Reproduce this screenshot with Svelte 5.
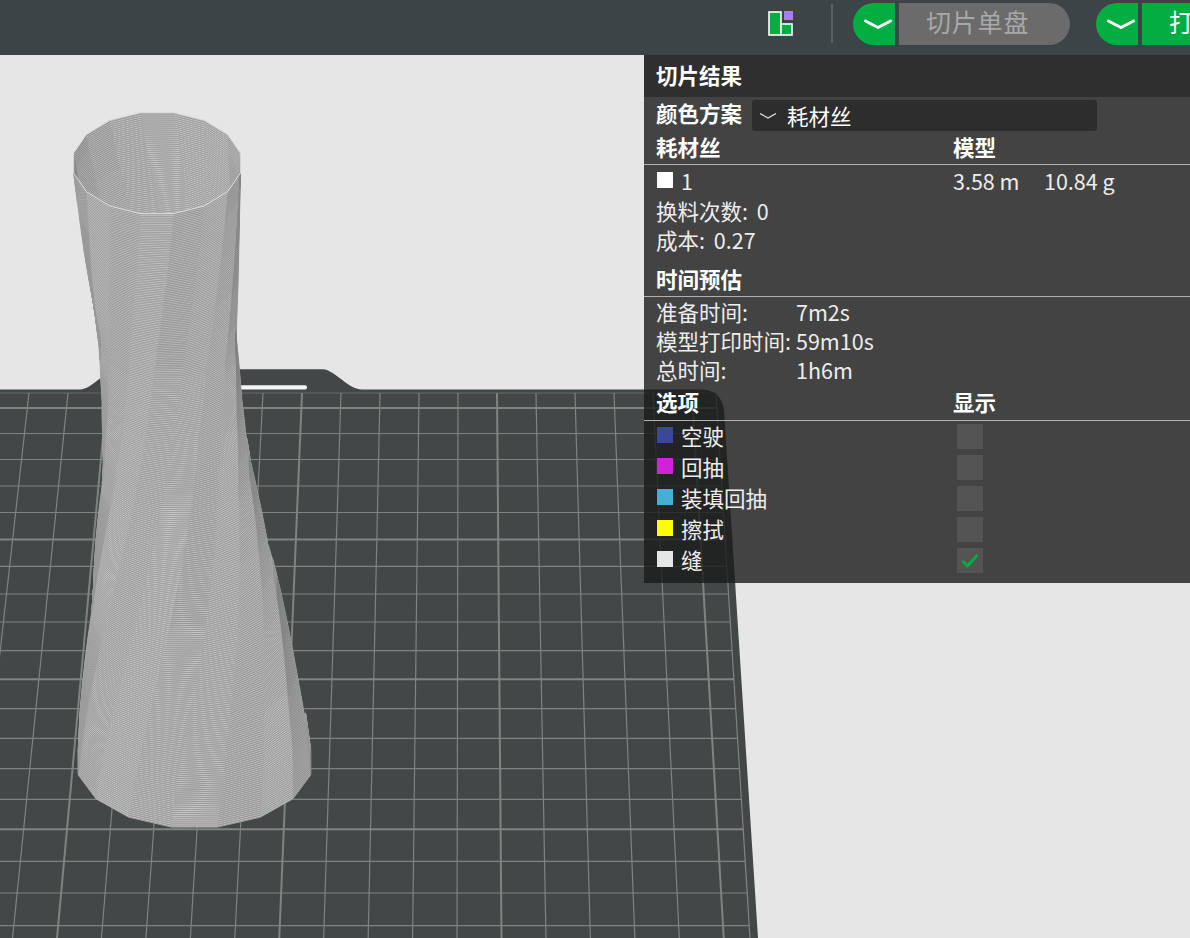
<script>
  // bed grid: column i from centre runs from x=497+39i at y=393 to x=501.5+44.45i at y=938
  const rowsY = [408, 433.5, 459.5, 486, 512.5, 539.5, 566.3, 594, 622, 650.7, 679.3, 708.7, 738.3, 768.7, 799.3, 829.3, 861.3, 893, 925.7];
  const thickRows = [408, 539.5, 679.3, 829.3];
  const edgeX = (y) => 716 + (y - 393) * 0.0627;
  const hLines = rowsY.map((y) => ({ y, x2: edgeX(y), w: thickRows.includes(y) ? 2 : 1.2 }));
  const vLines = [];
  for (let i = -12; i <= 5; i++) {
    vLines.push({ x1: 497 + 39 * i, x2: 501.5 + 44.45 * i, w: i % 5 === 0 ? 2 : 1.2 });
  }

  // vase silhouette: centre height, left x, right x
  const profile = [
    [163, 72, 242], [250, 84, 239], [340, 98, 237], [400, 102, 242], [470, 102, 252],
    [540, 96, 268], [600, 91, 282], [680, 83, 299], [720, 79, 308], [762, 76, 313]
  ];
  const TWIST = 90;
  const SIDES = 16;

  function ringAt(cy) {
    let a = profile[0], b = profile[profile.length - 1];
    for (let i = 0; i < profile.length - 1; i++) {
      if (cy >= profile[i][0] && cy <= profile[i + 1][0]) { a = profile[i]; b = profile[i + 1]; break; }
    }
    const t = (cy - a[0]) / (b[0] - a[0] || 1);
    const l = a[1] + (b[1] - a[1]) * t;
    const r = a[2] + (b[2] - a[2]) * t;
    const s = (762 - cy) / 599;
    return { cx: (l + r) / 2, rx: (r - l) / 2, ry: ((r - l) / 2) * (0.56 + 0.047 * s), tw: TWIST * (0.5 * s + 0.5 * s * s * (3 - 2 * s)) };
  }

  function vertex(ring, j, cy) {
    const deg = 11.25 + 22.5 * j - ring.tw;
    const rad = (deg * Math.PI) / 180;
    return [+(ring.cx + ring.rx * Math.cos(rad)).toFixed(2), +(cy + ring.ry * Math.sin(rad)).toFixed(2), deg + 11.25];
  }

  // layer lines packed just under a 2px period, so they beat against the pixels
  const STEP = 0.94;
  const outer = new Map();
  const inner = new Map();
  const put = (map, g, seg) => map.set(g, (map.get(g) || '') + seg);

  let layer = 0;
  for (let cy = 762; cy >= 163; cy -= STEP, layer++) {
    const ring = ringAt(cy);
    for (let j = 0; j < SIDES; j++) {
      const p = vertex(ring, j, cy);
      const q = vertex(ring, j + 1, cy);
      const mid = ((p[2] % 360) + 360) % 360;
      if (Math.sin((mid * Math.PI) / 180) < -0.05) continue;
      const base = 172 + 5 * Math.cos(((mid - 125) * Math.PI) / 180) + (j % 2 ? 2 : -2) - Math.max(0, (30 - mid) * 0.6);
      const g = Math.round((base + (layer % 2 ? 20 : -20)) / 4) * 4;
      put(outer, g, `M${p[0]} ${p[1]}L${q[0]} ${q[1]}`);
    }
  }
  layer = 0;
  for (let cy = 300; cy >= 163; cy -= STEP, layer++) {
    const ring = ringAt(cy);
    for (let j = 0; j < SIDES; j++) {
      const p = vertex(ring, j, cy);
      const q = vertex(ring, j + 1, cy);
      const mid = ((p[2] % 360) + 360) % 360;
      if (Math.sin((mid * Math.PI) / 180) > 0.05) continue;
      const base = 164 + 18 * Math.cos(((mid - 300) * Math.PI) / 180);
      const g = Math.round((base + (layer % 2 ? 20 : -20)) / 4) * 4;
      put(inner, g, `M${p[0]} ${p[1]}L${q[0]} ${q[1]}`);
    }
  }
  // light tones first, so every facet overlaps the same way
  const toPaths = (map) => [...map].sort((a, b) => b[0] - a[0]).map(([g, d]) => ({ c: `rgb(${g},${g},${g})`, d }));
  const outerPaths = toPaths(outer);
  const innerPaths = toPaths(inner);

  // solid underlay so gaps between layers never show the bed
  let underlay = '';
  for (let cy = 762; cy > 163; cy -= 12) {
    const low = ringAt(cy);
    const cy2 = Math.max(163, cy - 12);
    const high = ringAt(cy2);
    for (let j = 0; j < SIDES; j++) {
      const a = vertex(low, j, cy), b = vertex(low, j + 1, cy), c = vertex(high, j + 1, cy2), d = vertex(high, j, cy2);
      if (Math.sin((a[2] * Math.PI) / 180) < -0.05) continue;
      underlay += `M${a[0]} ${a[1]}L${b[0]} ${b[1]}L${c[0]} ${c[1]}L${d[0]} ${d[1]}Z`;
    }
  }
  const topRing = ringAt(163);
  let rim = [];
  for (let j = 0; j < SIDES; j++) {
    const v = vertex(topRing, j, 163);
    rim.push(`${v[0]},${v[1]}`);
  }
  rim = rim.join(' ');

  const options = [
    { name: '空驶', color: '#3b479a', on: false },
    { name: '回抽', color: '#cf22d9', on: false },
    { name: '装填回抽', color: '#47afd1', on: false },
    { name: '擦拭', color: '#ffff00', on: false },
    { name: '缝', color: '#e6e6e6', on: true }
  ];
  const times = [
    ['准备时间:', '7m2s'],
    ['模型打印时间:', '59m10s'],
    ['总时间:', '1h6m']
  ];
</script>

{#snippet chevron()}
  <svg class="chev" viewBox="0 0 42 42"><path d="M12.5 18 Q18 21 25 24.5 Q32 21 37.5 18" /></svg>
{/snippet}

<div class="app">
  <header class="toolbar">
    <svg class="layout-ico" viewBox="0 0 25 25">
      <rect x="1" y="1" width="12" height="23" fill="#00ae42" stroke="#fff" stroke-width="1.6" />
      <rect x="13" y="13" width="11" height="11" fill="#00ae42" stroke="#fff" stroke-width="1.6" />
      <rect x="16" y="0" width="9" height="9" fill="#a97bff" />
    </svg>
    <span class="divider"></span>
    <button class="drop">{@render chevron()}</button>
    <button class="action off">切片单盘</button>
    <button class="drop second">{@render chevron()}</button>
    <button class="action on">打印单盘</button>
  </header>

  <main class="viewport">
    <svg class="scene" viewBox="0 55 1190 883">
      <path class="bed" d="M0 389.5H80C92 389.5 104 370 121 369.3H323C335 370 348 389.5 362 389.5H700Q721 389.5 724 410L758 938H0Z" />
      <rect class="slot" x="136" y="385.3" width="171" height="4.3" rx="2" />
      <line class="grid dim" x1="0" y1="393" x2="716" y2="393" />
      {#each vLines as l}
        <line class="grid" x1={l.x1} y1="393" x2={l.x2} y2="938" stroke-width={l.w} />
      {/each}
      <line class="grid" x1="716" y1="393" x2="750" y2="938" stroke-width="1.2" />
      {#each hLines as l}
        <line class="grid" x1="0" y1={l.y} x2={l.x2} y2={l.y} stroke-width={l.w} />
      {/each}

      <defs>
        <clipPath id="mouth"><polygon points={rim} /></clipPath>
      </defs>
      <path d={underlay} fill="#a8a8a8" />
      {#each outerPaths as p}
        <path class="layer" d={p.d} stroke={p.c} />
      {/each}
      <g clip-path="url(#mouth)">
        <polygon points={rim} fill="#a4a4a4" />
        {#each innerPaths as p}
          <path class="layer" d={p.d} stroke={p.c} />
        {/each}
      </g>
      <polygon class="rim" points={rim} />
    </svg>

    <aside class="panel">
      <h2 class="title">切片结果</h2>
      <div class="scheme">
        <span class="bold">颜色方案</span>
        <div class="select">
          <svg class="sel-chev" viewBox="0 0 18 8"><path d="M1 1.5 L9 6 L17 1.5" /></svg>
          <span>耗材丝</span>
        </div>
      </div>

      <div class="cols head-row"><span>耗材丝</span><span>模型</span></div>
      <div class="cols filament">
        <span class="with-swatch"><i class="swatch" style="background:#fff"></i>1</span>
        <span class="usage"><span class="len">3.58 m</span><span>10.84 g</span></span>
      </div>
      <div class="line a">换料次数: 0</div>
      <div class="line b">成本: 0.27</div>

      <div class="cols head-row time-head"><span>时间预估</span></div>
      {#each times as t}
        <div class="time"><span>{t[0]}</span><span>{t[1]}</span></div>
      {/each}

      <div class="cols head-row opt-head"><span>选项</span><span>显示</span></div>
      {#each options as o}
        <div class="cols opt">
          <span class="with-swatch"><i class="swatch" style="background:{o.color}"></i>{o.name}</span>
          <span class="check">
            {#if o.on}
              <svg viewBox="0 0 18 15"><path d="M1.5 8 L6.5 13 L16.5 2" /></svg>
            {/if}
          </span>
        </div>
      {/each}
    </aside>
  </main>
</div>

<style>
  :global(body) { margin: 0; background: #e6e6e6; }
  .app {
    width: 1190px; height: 938px; overflow: hidden;
    display: flex; flex-direction: column;
    font-family: "Noto Sans CJK SC", "Noto Sans", sans-serif;
  }

  .toolbar {
    flex: none; height: 55px; box-sizing: border-box;
    background: #3c4447;
    display: flex; align-items: flex-start;
    padding: 3px 0 0 768px; overflow: hidden;
  }
  .layout-ico { flex: none; width: 25px; height: 25px; margin: 8px 0 0; }
  .divider { flex: none; width: 2px; height: 39px; margin: 1px 20px 0 38px; background: #596164; }
  button { border: 0; padding: 0; margin: 0; font: inherit; flex: none; height: 42px; }
  .drop {
    width: 42px; margin-right: 4px;
    background: #00ae42; border-radius: 21px 0 0 21px;
  }
  .drop.second { margin-left: 26px; }
  .chev { display: block; width: 42px; height: 42px; }
  .chev path { fill: none; stroke: #fff; stroke-width: 3; stroke-linecap: round; stroke-linejoin: round; }
  .action { font-size: 25px; line-height: 37px; padding-bottom: 5px; white-space: nowrap; }
  .action.off {
    width: 171px; background: #6b6b6b; color: #a8a8a8;
    border-radius: 0 21px 21px 0; letter-spacing: 0.8px;
    text-align: left; padding-left: 27px;
  }
  .action.on {
    width: 140px; background: #00ae42; color: #fff;
    text-align: left; padding-left: 27px;
  }

  .viewport { flex: 1; position: relative; background: #e6e6e6; overflow: hidden; }
  .scene { position: absolute; inset: 0; width: 1190px; height: 883px; display: block; }
  .bed { fill: #434748; }
  .slot { fill: #f4f4f4; }
  .grid { stroke: #7e8480; }
  .grid.dim { stroke: #666b6b; stroke-width: 1; }
  .layer { fill: none; stroke-width: 1; }
  .rim { fill: none; stroke: #dedede; stroke-width: 1; }

  .panel {
    position: absolute; top: 0; left: 644px; right: 0; height: 528px;
    background: rgba(26, 26, 26, 0.8);
    color: #ededed; font-size: 21.5px;
    display: flex; flex-direction: column;
  }
  .title {
    margin: 0; height: 42px; line-height: 40px; padding-left: 12px;
    background: #2f2f2f; color: #fff; font-size: 21.5px; font-weight: 700;
  }
  .bold { font-weight: 700; color: #fff; }
  .scheme { height: 37px; display: flex; gap: 10px; padding: 0 0 0 12px; align-items: flex-start; line-height: 32px; }
  .select {
    width: 345px; height: 31px; margin-top: 3px; border-radius: 3px;
    background: #2d2d2d; color: #fff;
    display: flex; align-items: center; line-height: 29px;
  }
  .sel-chev { width: 18px; height: 8px; margin: 0 10px 0 7px; }
  .sel-chev path { fill: none; stroke: #e8e8e8; stroke-width: 1.2; }

  .cols { display: grid; grid-template-columns: 297px 1fr; padding-left: 12px; align-items: center; }
  .head-row {
    height: 31px; line-height: 26px; box-sizing: border-box;
    border-bottom: 1px solid #b0b0b0; font-weight: 700; color: #fff;
    align-items: start;
  }
  .time-head { margin-top: 9px; height: 33px; line-height: 30px; }
  .opt-head { margin-top: 1px; height: 36px; line-height: 34px; }
  .filament { height: 32px; line-height: 32px; }
  .with-swatch { display: flex; align-items: center; gap: 8px; }
  .swatch { flex: none; width: 16px; height: 16px; margin: -3px 0 0 1px; }
  .opt .with-swatch { margin-top: -2px; }
  .opt .swatch { margin-top: -1px; }
  .usage { display: flex; }
  .len { width: 91px; }
  .line { padding-left: 12px; word-spacing: 4px; }
  .line.a { height: 30px; line-height: 27px; }
  .line.b { height: 28px; line-height: 25px; }
  .time { display: grid; grid-template-columns: 140px 1fr; padding-left: 12px; height: 29px; line-height: 29px; }
  .opt { height: 31px; line-height: 31px; }
  .check { width: 26px; height: 25px; margin-left: 4px; background: #545454; display: grid; place-items: center; }
  .check svg { width: 18px; height: 15px; }
  .check path { fill: none; stroke: #00ae42; stroke-width: 3; }
</style>
